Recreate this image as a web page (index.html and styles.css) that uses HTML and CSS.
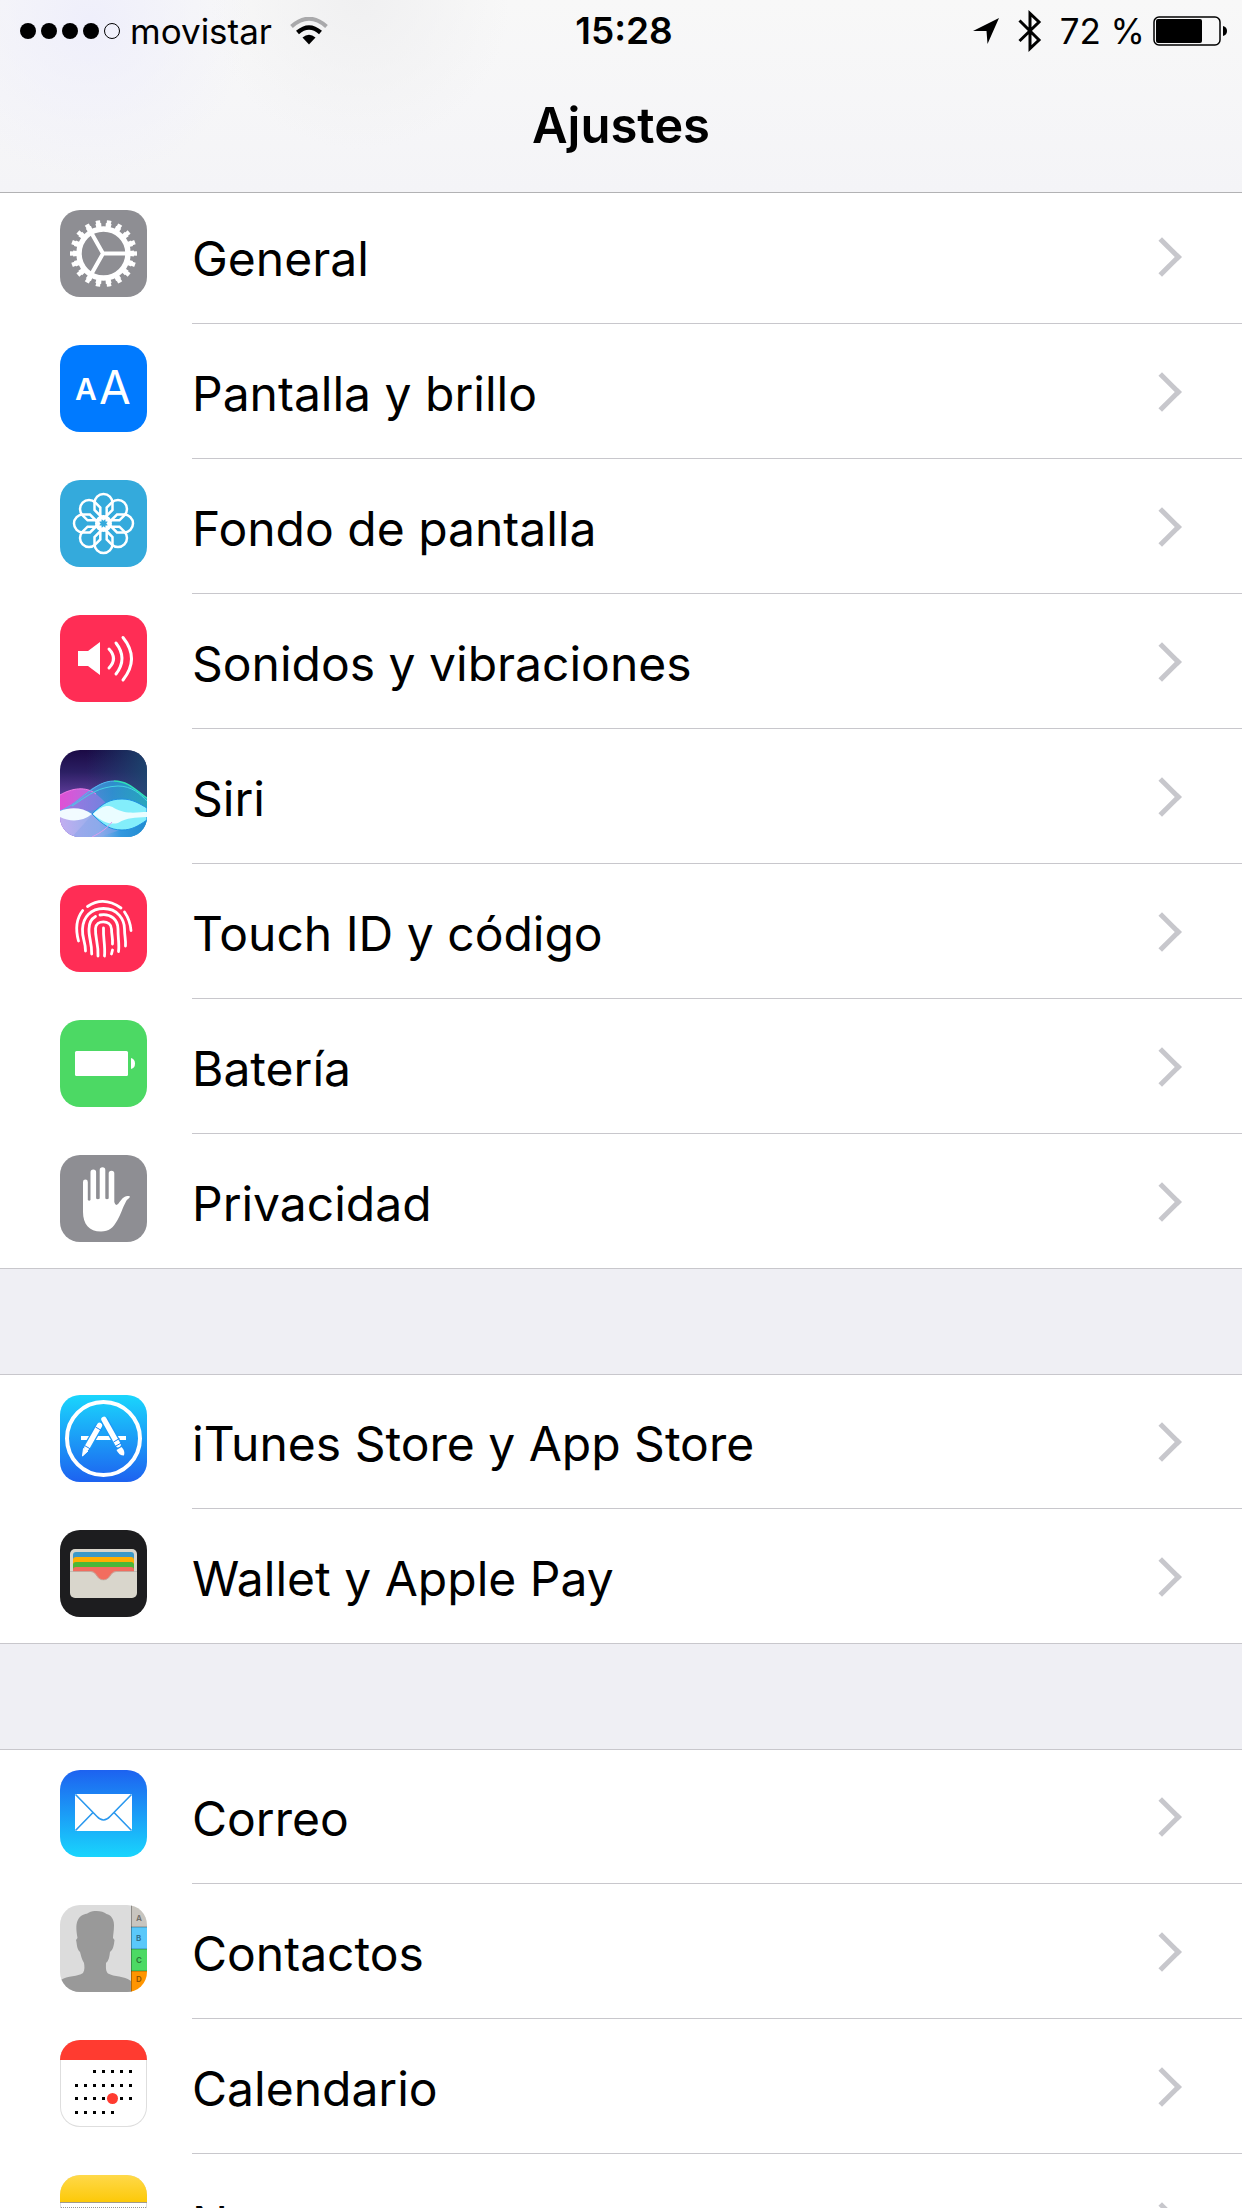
FILE: index.html
```html
<!DOCTYPE html>
<html lang="es">
<head>
    <meta charset="UTF-8">
    <meta name="viewport" content="width=device-width, initial-scale=1">
    <title>Ajustes</title>
    <link rel="stylesheet" href="styles.css">
</head>
<body>
<div class="screen">
    <header class="header">
        <div class="status">
            <div class="status-left">
                <div class="signal">
                    <i></i><i></i><i></i><i></i><i class="empty"></i>
                </div>
                <span class="carrier">movistar</span>
                <svg class="wifi" width="38" height="28" viewBox="0 0 38 28" fill="none">
                    <path d="M1.5 9.5Q19-6 36.500 9.500" stroke="#a9a9ab" stroke-width="4"/>
                    <path d="M7.500 15.500Q19 5.500 30.500 15.500" stroke="#000" stroke-width="4.500"/>
                    <path d="M12.500 20.500Q19 15 25.500 20.500L19 27.500z" fill="#000"/>
                </svg>
            </div>
            <span class="time">15:28</span>
            <div class="status-right">
                <svg width="28" height="28" viewBox="0 0 28 28"><path d="M27 1L15.500 27 14.500 14H1z"/></svg>
                <svg class="bluetooth" width="24" height="42" viewBox="0 0 24 42" fill="none" stroke="#000" stroke-width="3"><path d="M1.500 10.500L21 30 12 38.500V3.500L21 12 1.500 31"/></svg>
                <span class="percent">72 %</span>
                <svg width="75" height="30" viewBox="0 0 75 30">
                    <rect x="1" y="1" width="66" height="28" rx="5" fill="none" stroke="#000" stroke-width="1.500"/>
                    <rect x="3" y="3" width="46" height="24" rx="2"/>
                    <path d="M70 10q4 1 4 5t-4 5z"/>
                </svg>
            </div>
        </div>
        <h1 class="title">Ajustes</h1>
    </header>

    <main class="settings">
        <ul class="group">
            <li><a class="row" href="#">
                <svg class="icon gray" viewBox="0 0 87 87" fill="none" stroke="#fff">
                    <circle cx="43.500" cy="43.500" r="24.500" stroke-width="5.500"/>
                    <circle cx="43.500" cy="43.500" r="28.500" stroke-width="4" pathLength="360" stroke-dasharray="11 9" stroke-dashoffset="5.500"/>
                    <circle cx="43.500" cy="43.500" r="31" stroke-width="5" pathLength="360" stroke-dasharray="8 12" stroke-dashoffset="4"/>
                    <path d="M66 43.500H42.500M32 24l11 19.500L32 63" stroke-width="4"/>
                </svg>
                <span class="label">General</span>
            </a></li>
            <li><a class="row" href="#">
                <svg class="icon blue" viewBox="0 0 87 87" fill="#fff">
                    <text class="small-a" x="15" y="55">A</text>
                    <text class="big-a" x="39" y="59">A</text>
                </svg>
                <span class="label">Pantalla y brillo</span>
            </a></li>
            <li><a class="row" href="#">
                <svg class="icon sky" viewBox="0 0 87 87" fill="none" stroke="#fff" stroke-width="2.500">
                    <defs><path id="petal" d="M43.500 39L34.500 30V23a9 9 0 0 1 18 0V30z"/></defs>
                    <use href="#petal"/>
                    <use href="#petal" transform="rotate(45 43.500 43.500)"/>
                    <use href="#petal" transform="rotate(90 43.500 43.500)"/>
                    <use href="#petal" transform="rotate(135 43.500 43.500)"/>
                    <use href="#petal" transform="rotate(180 43.500 43.500)"/>
                    <use href="#petal" transform="rotate(225 43.500 43.500)"/>
                    <use href="#petal" transform="rotate(270 43.500 43.500)"/>
                    <use href="#petal" transform="rotate(315 43.500 43.500)"/>
                    <circle cx="43.500" cy="43.500" r="6.500" stroke-width="4"/>
                </svg>
                <span class="label">Fondo de pantalla</span>
            </a></li>
            <li><a class="row" href="#">
                <svg class="icon pink" viewBox="0 0 87 87" fill="none" stroke="#fff" stroke-width="3" stroke-linecap="round">
                    <path d="M18 36H28L40 27V60L28 51H18z" fill="#fff" stroke="none"/>
                    <path d="M49 34Q58 43.500 49 53M56 28Q68 43.500 56 59M63 22.500Q80 43.500 63 65"/>
                </svg>
                <span class="label">Sonidos y vibraciones</span>
            </a></li>
            <li><a class="row" href="#">
                <svg class="icon" viewBox="0 0 87 87">
                    <defs>
                        <linearGradient id="siriBg" x1="0" y1="0" x2="0" y2="1">
                            <stop offset="0" stop-color="#1b0a45"/><stop offset=".25" stop-color="#2b1f63"/><stop offset=".5" stop-color="#5b3a96"/><stop offset="1" stop-color="#b9a2ea"/>
                        </linearGradient>
                        <linearGradient id="siriSide" x1="0" y1="0" x2="1" y2="0">
                            <stop offset=".3" stop-color="#17406b" stop-opacity="0"/><stop offset="1" stop-color="#1b4a70" stop-opacity=".85"/>
                        </linearGradient>
                        <linearGradient id="siriWave" x1="0" y1="0" x2="1" y2="0">
                            <stop offset="0" stop-color="#7a8fe6"/><stop offset=".6" stop-color="#2d9cdb"/><stop offset="1" stop-color="#27b5c9"/>
                        </linearGradient>
                        <linearGradient id="siriPink" x1="0" y1="0" x2="1" y2="0">
                            <stop offset="0" stop-color="#e94bd0"/><stop offset="1" stop-color="#7b93ea"/>
                        </linearGradient>
                        <linearGradient id="siriLow" x1="0" y1="0" x2="1" y2="0">
                            <stop offset="0" stop-color="#c3aef0"/><stop offset=".45" stop-color="#8fb0ec"/><stop offset=".7" stop-color="#3398df"/><stop offset="1" stop-color="#1f8bd0"/>
                        </linearGradient>
                    </defs>
                    <path d="M0 0H87V87H0z" fill="url(#siriBg)"/>
                    <path d="M0 0H87V60H0z" fill="url(#siriSide)"/>
                    <path d="M0 45C12 38 26 36 36 44C44 50 52 60 60 64V87H0z" fill="url(#siriPink)"/>
                    <path d="M0 61C20 52 32 31 54 31C70 31 78 43 87 48V87H0z" fill="url(#siriWave)" opacity=".85"/>
                    <path d="M0 45C12 38 26 36 36 44C44 50 46 54 52 58L0 64z" fill="#cf5ce0" opacity=".35"/>
                    <path d="M0 45C12 38 26 36 36 44" fill="none" stroke="#f07be4"/>
                    <path d="M0 61C22 52 34 31 54 31" fill="none" stroke="#55b8f0"/>
                    <path d="M54 31C70 31 78 43 87 48" fill="none" stroke="#2fe0b8" stroke-width="1.500"/>
                    <path d="M12 56C30 44 38 37 58 36C72 36 80 44 87 51" fill="none" stroke="#46d3e4"/>
                    <path d="M0 64L87 64V87H0z" fill="url(#siriLow)"/>
                    <path d="M33 64L60 80 40 87H12z" fill="#8aa4ea" opacity=".5"/>
                    <path d="M32 64C43 53 50 49 62 49C73 49 80 54 87 58V70C78 76 72 80 62 80C50 80 43 75 32 64z" fill="#83eefb" stroke="#208fe0"/>
                    <path d="M33 64C42 56 48 54 54 58C66 65 78 62 87 62V67C74 68 68 67 58 73C50 75 42 72 33 64z" fill="#eafdff"/>
                    <path d="M0 61C10 57 22 57 32 64C22 72 10 72 0 67z" fill="#f2fbff"/>
                    <path d="M32 87C42 82 47 78 52 72" fill="none" stroke="#dd9cec"/>
                </svg>
                <span class="label">Siri</span>
            </a></li>
            <li><a class="row" href="#">
                <svg class="icon pink" viewBox="0 0 87 87" fill="none" stroke="#fff" stroke-width="2.800" stroke-linecap="round">
                    <path d="M27.500 21.500Q43.500 10.500 61 23"/>
                    <path d="M22.700 25.500C16 34 15 43 18.500 56"/>
                    <path d="M64.500 27C68 32 70.500 39 71 45.500"/>
                    <path d="M25.500 66C25.500 56 22 54 22.500 44C23 32 31 23.500 43.500 23.500C58 23.500 64.500 35 64.500 44C64.500 51 66 55 65.500 61"/>
                    <path d="M31.700 69C32 58 28.500 52 29 44C29 38 31 34 35.500 31.500"/>
                    <path d="M40 30C51 28 58 35 58 44C58 54 59.500 60 58.500 66.500"/>
                    <path d="M38 71C38.500 58 35 53 35.500 43.500C36 34.500 51 34.500 51.500 44C51.500 50 53 53 52.500 59"/>
                    <path d="M44.500 71C45.500 60 43 54 43.500 43M52.500 65L51.500 69"/>
                </svg>
                <span class="label">Touch ID y código</span>
            </a></li>
            <li><a class="row" href="#">
                <svg class="icon green" viewBox="0 0 87 87" fill="#fff">
                    <rect x="15" y="31" width="53" height="25" rx="1.500"/>
                    <path d="M71 38q4 1 4 5.500t-4 5.500z"/>
                </svg>
                <span class="label">Batería</span>
            </a></li>
            <li><a class="row" href="#">
                <svg class="icon gray" viewBox="0 0 87 87" fill="#fff">
                    <path d="M23 27a2.400 2.400 0 0 1 4.800 0V45q1.400 1.500 2.700 0V17.300a2.800 2.800 0 0 1 5.600 0V43.500q1.800 1.500 3.600 0V15a2.800 2.800 0 0 1 5.600 0V43.500q1.700 1.500 3.400 0V18.500a2.800 2.800 0 0 1 5.600 0V47Q55.500 52 58.500 48.500C62 44 64.500 39.500 70 41.500C69.500 43.500 67.500 43.500 66 46.500C62 54 61.500 58 57.500 65C53 73 49 76.500 41 76.500C29 76.500 23 69 23 57z"/>
                </svg>
                <span class="label">Privacidad</span>
            </a></li>
        </ul>

        <ul class="group">
            <li><a class="row" href="#">
                <svg class="icon" viewBox="0 0 87 87" fill="none" stroke="#fff">
                    <defs>
                        <linearGradient id="storeBg" x1="0" y1="0" x2="0" y2="1"><stop offset="0" stop-color="#1ad6fd"/><stop offset="1" stop-color="#1d62f0"/></linearGradient>
                    </defs>
                    <path d="M0 0H87V87H0z" fill="url(#storeBg)" stroke="none"/>
                    <circle cx="43.500" cy="43.500" r="36.500" stroke-width="4"/>
                    <path d="M21 43H66" stroke-width="4"/>
                    <path d="M39.500 30.500L27 52.500" stroke="#1e9bf7" stroke-width="8"/>
                    <path d="M39.500 30.500L27 52.500" stroke-width="5.500" stroke-linecap="round"/>
                    <path d="M23.500 53.500l4.500 2.500-5.500 5z" fill="#fff"/>
                    <path d="M44 24.500L58 49.500" stroke="#1e9bf7" stroke-width="8"/>
                    <path d="M44 24.500L58 49.500" stroke-width="5.500" stroke-linecap="round"/>
                    <path d="M56.500 55l5-3q4 4 2.500 8.500q-5 0-7.500-5.500z" fill="#fff" stroke="none"/>
                    <path d="M35.500 32l6 3.500M24.500 50.500l6 3.500M53.500 47l6-3.500M55 51.500l7-4" stroke="#1e84f5" stroke-width="1"/>
                </svg>
                <span class="label">iTunes Store y App Store</span>
            </a></li>
            <li><a class="row" href="#">
                <svg class="icon black" viewBox="0 0 87 87">
                    <rect x="10" y="19" width="67" height="49" rx="5" fill="#d9d6cc"/>
                    <path d="M13 42V25q0-3 3-3H71q3 0 3 3V42z" fill="#3b99c9"/>
                    <path d="M13 42V30q0-3 3-3H71q3 0 3 3V42z" fill="#ffae03"/>
                    <path d="M13 42V35q0-3 3-3H71q3 0 3 3V42z" fill="#4bb838"/>
                    <path d="M13 42V40q0-3 3-3H71q3 0 3 3V42H56C50 42 51 50 43.500 50S37 42 31 42z" fill="#f26d5f"/>
                    <path d="M10 41.500H31C37 41.500 37 50 43.500 50S50 41.500 56 41.500H77" fill="none" stroke="#b9b6ad" stroke-width=".8"/>
                </svg>
                <span class="label">Wallet y Apple Pay</span>
            </a></li>
        </ul>

        <ul class="group">
            <li><a class="row" href="#">
                <svg class="icon" viewBox="0 0 87 87">
                    <defs>
                        <linearGradient id="mailBg" x1="0" y1="0" x2="0" y2="1"><stop offset="0" stop-color="#1d62f0"/><stop offset="1" stop-color="#19d5fd"/></linearGradient>
                    </defs>
                    <path d="M0 0H87V87H0z" fill="url(#mailBg)"/>
                    <rect x="15" y="24" width="57" height="37" rx="1" fill="#fff"/>
                    <path d="M15.500 24.500L37 46.500Q43.500 53.500 50 46.500L71.500 24.500M15.500 60.500L33 42.500M71.500 60.500L54 42.500" fill="none" stroke="#2a98ee" stroke-width="1.600"/>
                </svg>
                <span class="label">Correo</span>
            </a></li>
            <li><a class="row" href="#">
                <svg class="icon" viewBox="0 0 87 87">
                    <path d="M0 0H71V87H0z" fill="#dcdcdc"/>
                    <path d="M0 75.500C8 70 18 72 23 68C25 65 24.500 61 24 58C21.500 54 21 50 20 47C16.500 44 17 38 16 35L17.500 33C16 24 15.500 18 19 13C22 9 26 9.500 29 7.500C35 5 43 6 46.500 9C51 10 54 14 54 20C54 26 53 30 53 33L54.500 35C54 40 53 45 50 47C49.500 52 48.500 56 46 58C46 62 45.500 66 48 68.500C54 72 64 70.500 71 76V87H0z" fill="#999"/>
                    <path d="M71 0H87V22H71z" fill="#c8c5bf"/>
                    <path d="M71 22H87V44H71z" fill="#5ac8fa"/>
                    <path d="M71 44H87V66H71z" fill="#4cd964"/>
                    <path d="M71 66H87V87H71z" fill="#ff9500"/>
                    <path d="M71.500 0V87M71 22H87M71 44H87M71 66H87" fill="none" stroke="#000" stroke-opacity=".3"/>
                    <g class="tabs"><text x="76" y="16">A</text><text x="76" y="36">B</text><text x="76" y="58">C</text><text x="76" y="77">D</text></g>
                </svg>
                <span class="label">Contactos</span>
            </a></li>
            <li><a class="row" href="#">
                <svg class="icon paper" viewBox="0 0 87 87" fill="none">
                    <path d="M0 0H87V20H0z" fill="#ff3b30"/>
                    <path d="M33 31.500H73M15 45.500H73M15 58.500H73M15 72.500H55" stroke="#000" stroke-width="3" stroke-dasharray="3 6"/>
                    <circle cx="52.500" cy="58.500" r="5.500" fill="#ff3b30"/>
                </svg>
                <span class="label">Calendario</span>
            </a></li>
            <li><a class="row" href="#">
                <svg class="icon paper" viewBox="0 0 87 87">
                    <defs>
                        <linearGradient id="notesBg" x1="0" y1="0" x2="0" y2="1"><stop offset="0" stop-color="#ffd94a"/><stop offset="1" stop-color="#fdc908"/></linearGradient>
                    </defs>
                    <path d="M0 0H87V27H0z" fill="url(#notesBg)"/>
                    <path d="M0 27.500H87" stroke="#a09a8c"/>
                    <path d="M1 32.500H87" stroke="#999" stroke-dasharray="1 1"/>
                    <path d="M0 50.500H87M0 68.500H87" stroke="#ccc"/>
                </svg>
                <span class="label">Notas</span>
            </a></li>
        </ul>
    </main>
</div>
</body>
</html>
```
FILE: styles.css
```css
@charset "UTF-8";
/* reset */
body,h1,ul{margin:0;padding:0}
ul{list-style:none}
a{text-decoration:none;color:inherit}
svg{display:block;flex:none}

body{
    font-family: Inter, "Liberation Sans", sans-serif;
    color: #000;
    background: #efeff4;
}
.screen{
    height: 100vh;
    overflow: hidden;
}

/* status bar + title */
.header{
    position: relative;
    z-index: 2;
    box-sizing: border-box;
    height: 193px;
    border-bottom: 1px solid #b2b2b4;
    background:
        radial-gradient(circle at 90px 20px, #efeffb, rgba(239,239,251,0) 160px),
        radial-gradient(circle at 360px 0, #f0f0f1, rgba(240,240,241,0) 150px),
        linear-gradient(#f8f8f8, #f4f4f7);
}
.status{
    display: grid;
    grid-template-columns: 1fr auto 1fr;
    align-items: center;
    height: 62px;
    padding: 0 14px 0 20px;
    font-size: 35px;
    line-height: 44px;
}
.status-left,.status-right{
    display: flex;
    align-items: center;
}
.status-right{
    justify-content: flex-end;
}
.signal{
    display: flex;
    gap: 5px;
}
.signal i{
    box-sizing: border-box;
    width: 16px;
    height: 16px;
    border-radius: 50%;
    background: #000;
}
.signal .empty{
    border: 1px solid #000;
    background: none;
}
.carrier{
    margin: 0 18px 0 10px;
}
.time{
    font-size: 37px;
    font-weight: 600;
}
.bluetooth{
    margin: 0 18px;
}
.percent{
    margin-right: 8px;
}
.title{
    padding-top: 34px;
    font-size: 49px;
    line-height: 60px;
    font-weight: 600;
    text-align: center;
}

/* the list is scrolled a little under the header */
.settings{
    margin-top: -4px;
}
.group{
    margin-bottom: 105px;
    background: #fff;
    box-shadow: inset 0 1px #c8c7cc, inset 0 -1px #c8c7cc;
}
.row{
    display: flex;
    align-items: flex-start;
    height: 135px;
}
.icon{
    width: 87px;
    height: 87px;
    margin: 21px 45px 0 60px;
    border-radius: 20px;
}
.label{
    flex: 1;
    display: flex;
    align-items: center;
    justify-content: space-between;
    box-sizing: border-box;
    height: 135px;
    padding: 6px 66px 0 0;
    border-bottom: 1px solid #c8c7cc;
    font-size: 48px;
    line-height: 60px;
}
.label::after{
    content: "";
    box-sizing: border-box;
    width: 28px;
    height: 28px;
    margin-top: -4px;
    border: solid #c7c7cc;
    border-width: 5px 5px 0 0;
    transform: rotate(45deg);
}

.gray{background:#8e8e93}
.blue{background:#007aff}
.sky{background:#34aadc}
.pink{background:#ff2d55}
.green{background:#4cd964}
.black{background:#1d1d1f}
.paper{
    background: #fff;
    box-shadow: inset 0 0 0 1px #dedede;
}
.small-a{font-size:30px;font-weight:600}
.big-a{font-size:46px;font-weight:400}
.tabs{
    font-size: 8px;
    font-weight: 700;
    fill: rgba(0,0,0,.45);
}
```
